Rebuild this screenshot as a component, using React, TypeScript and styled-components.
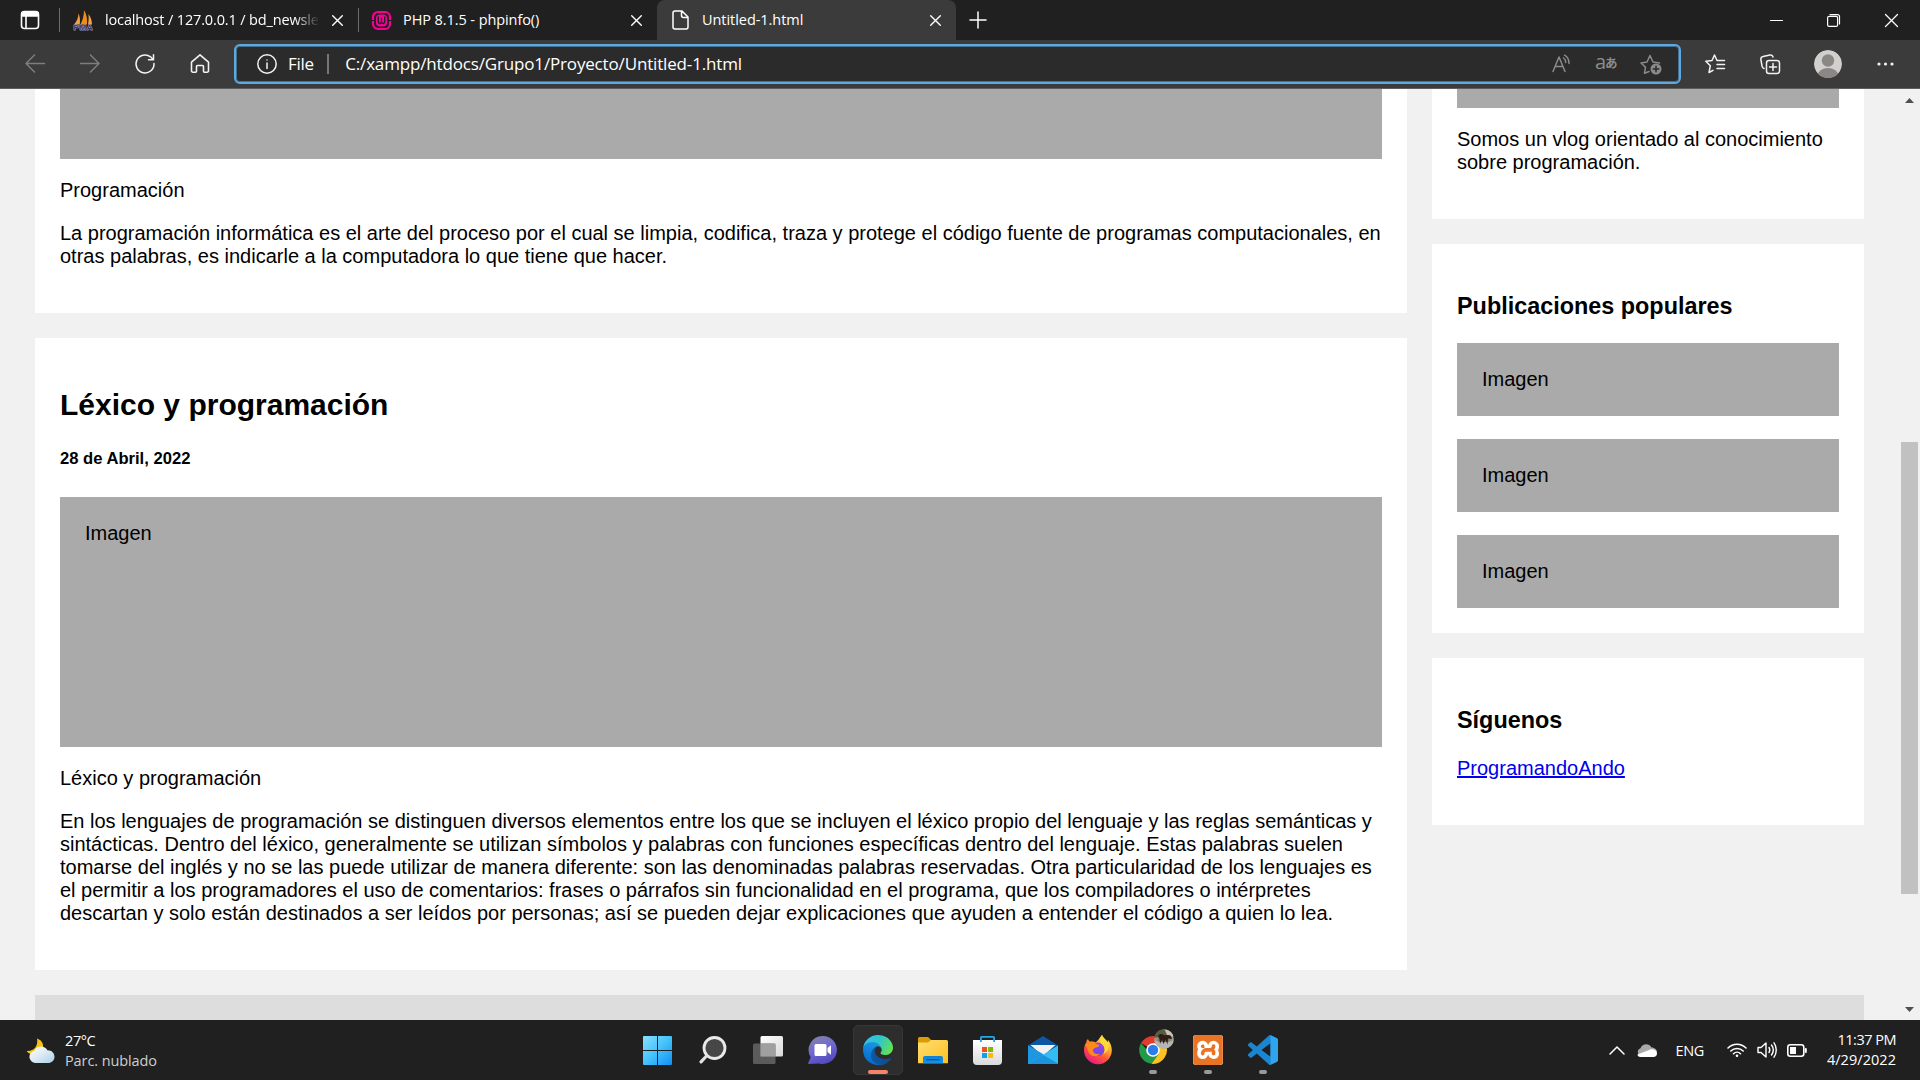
import React from "react";
import styled, { createGlobalStyle } from "styled-components";
import { SiXampp } from "react-icons/si";

const GlobalStyle = createGlobalStyle`
  html, body { margin: 0; padding: 0; overflow: hidden; background: #202020; }
  * { box-sizing: border-box; }
`;

const UI_FONT = `"Open Sans", "Noto Sans", sans-serif`;

const Screen = styled.div`
  width: 1920px;
  height: 1080px;
  display: flex;
  flex-direction: column;
  overflow: hidden;
  font-family: ${UI_FONT};
`;

/* ---------- Browser chrome ---------- */

const TabStrip = styled.div`
  height: 40px;
  flex: none;
  display: flex;
  background: #202020;
  color: #fff;
`;

const TabActions = styled.div`
  width: 59px;
  padding-left: 20px;
  display: flex;
  align-items: center;
`;

const Tab = styled.div<{ $width: number; $active?: boolean }>`
  width: ${(p) => p.$width}px;
  height: 40px;
  padding: 0 15px 0 ${(p) => (p.$active ? 15 : 13)}px;
  display: flex;
  align-items: center;
  gap: ${(p) => (p.$active ? 13 : 12)}px;
  background: ${(p) => (p.$active ? "#3b3b3b" : "transparent")};
  border-radius: 8px 8px 0 0;
`;

const TabRule = styled.div`
  width: 1px;
  height: 24px;
  margin-top: 8px;
  background: #6c6c6c;
`;

const TabTitle = styled.span<{ $spacing: number; $fade?: boolean }>`
  flex: 1;
  min-width: 0;
  overflow: hidden;
  white-space: nowrap;
  font-size: 14.5px;
  line-height: 20px;
  letter-spacing: ${(p) => p.$spacing}px;
  ${(p) => p.$fade && "mask-image: linear-gradient(90deg, #000 88%, transparent);"}
`;

const NewTab = styled.div`
  width: 44px;
  display: flex;
  align-items: center;
  justify-content: center;
`;

const WindowButtons = styled.div`
  margin-left: auto;
  display: flex;
  align-items: center;
`;

const WindowButton = styled.div`
  width: 57.5px;
  display: flex;
  justify-content: center;
`;

const Toolbar = styled.div`
  height: 49px;
  flex: none;
  display: flex;
  padding: 4px 0 4px 7px;
  background: #3b3b3b;
  border-bottom: 1px solid #5e5e5e;
  color: #f2f2f2;
`;

const NavButton = styled.div<{ $dim?: boolean; $width?: number }>`
  width: ${(p) => p.$width || 55}px;
  flex: none;
  height: 39px;
  display: flex;
  align-items: center;
  justify-content: center;
  color: ${(p) => (p.$dim ? "#7e7e7e" : "#f2f2f2")};
`;

const AddressBar = styled.div`
  width: 1447px;
  height: 40px;
  margin-left: 7px;
  padding: 0 17px 0 21px;
  display: flex;
  align-items: center;
  border: 2px solid #5ea9e2;
  box-shadow: inset 0 0 0 1px #46708f;
  border-radius: 6px;
  background: #2b2b2b;
`;

const AddressText = styled.span<{ $left: number; $spacing: number }>`
  margin-left: ${(p) => p.$left}px;
  font-size: 17px;
  line-height: 24px;
  letter-spacing: ${(p) => p.$spacing}px;
  white-space: nowrap;
  color: #fff;
`;

const AddressRule = styled.div`
  width: 2px;
  height: 20px;
  margin-left: 13px;
  background: #777;
`;

const AddressActions = styled.div`
  margin-left: auto;
  display: flex;
  align-items: center;
  gap: 23px;
  color: #8b8b8b;
`;

const BrowserActions = styled.div`
  width: 228px;
  margin-left: 6px;
  display: flex;
  align-items: center;
`;

/* ---------- Web page ---------- */

const Viewport = styled.div`
  height: 931px;
  flex: none;
  display: flex;
  overflow: hidden;
  background: #f1f1f1;
  color: #000;
  font-family: Arial, "Liberation Sans", sans-serif;
  font-size: 20px;
  line-height: 23px;
`;

const Page = styled.div`
  width: 1900px;
  padding: 0 36px 0 35px;
`;

const Columns = styled.div`
  display: grid;
  grid-template-columns: 1372px 432px;
  column-gap: 25px;
  height: 881px;
`;

const Column = styled.div`
  display: flex;
  flex-direction: column;
  gap: 25px;
`;

const Card = styled.section<{ $cut?: boolean }>`
  padding: ${(p) => (p.$cut ? 0 : 25)}px 25px 25px;
  background: #fff;
  display: flow-root;
`;

const Picture = styled.div<{ $height: number; $gap?: boolean; $empty?: boolean }>`
  height: ${(p) => p.$height}px;
  padding: ${(p) => (p.$empty ? 0 : 25)}px;
  overflow: hidden;
  background: #aaa;
  margin-bottom: ${(p) => (p.$gap ? 23 : 0)}px;
`;

const Paragraph = styled.p`
  margin: 20px 0;
`;

const Title = styled.h2`
  margin: 24px 0 27px;
  font-size: 30px;
  line-height: 35px;
`;

const DateLine = styled.h5`
  margin: 0 0 29px;
  font-size: 16.6px;
  line-height: 19px;
`;

const SideTitle = styled.h3`
  margin: 23px 0;
  font-size: 23.4px;
  line-height: 28px;
`;

const SideLink = styled.a`
  color: #0000ee;
  text-decoration: underline;
`;

const Footer = styled.div`
  height: 25px;
  margin-top: 25px;
  background: #ddd;
`;

const ScrollTrack = styled.div`
  width: 20px;
  padding-right: 1px;
  display: flex;
  flex-direction: column;
  align-items: center;
  background: #f1f1f1;
`;

const ScrollArrow = styled.div<{ $down?: boolean }>`
  width: 9px;
  height: 5px;
  margin-top: ${(p) => (p.$down ? "auto" : "9px")};
  margin-bottom: ${(p) => (p.$down ? "8px" : "0")};
  background: #505050;
  clip-path: ${(p) => (p.$down ? "polygon(0 0, 100% 0, 50% 100%)" : "polygon(50% 0, 100% 100%, 0 100%)")};
`;

const ScrollThumb = styled.div`
  width: 17px;
  height: 452px;
  margin-top: 339px;
  background: #c1c1c1;
`;

/* ---------- Taskbar ---------- */

const TaskbarRow = styled.div`
  height: 60px;
  flex: none;
  display: flex;
  background: #202020;
  color: #fff;
  font-size: 14.5px;
`;

const Weather = styled.div`
  width: 630px;
  padding: 2px 0 0 25px;
  display: flex;
  align-items: center;
  gap: 10px;
`;

const Lines = styled.div<{ $right?: boolean }>`
  display: flex;
  flex-direction: column;
  text-align: ${(p) => (p.$right ? "right" : "left")};
  line-height: 20px;
  white-space: nowrap;
`;

const Line = styled.span<{ $spacing: number; $dim?: boolean }>`
  letter-spacing: ${(p) => p.$spacing}px;
  color: ${(p) => (p.$dim ? "#cfcfcf" : "#fff")};
`;

const Apps = styled.div`
  display: flex;
  padding-top: 5px;
`;

const AppButton = styled.div<{ $active?: boolean }>`
  width: 50px;
  height: 50px;
  margin: 0 2px 0 3px;
  padding-top: 9px;
  display: flex;
  flex-direction: column;
  align-items: center;
  border-radius: 5px;
  border: 1px solid ${(p) => (p.$active ? "#373737" : "transparent")};
  background: ${(p) => (p.$active ? "#2d2d2d" : "transparent")};
`;

const RunMark = styled.div<{ $active?: boolean }>`
  width: ${(p) => (p.$active ? 20 : 8)}px;
  height: 4px;
  margin-top: 5px;
  border-radius: 2px;
  background: ${(p) => (p.$active ? "#f4836a" : "#9a9a9a")};
`;

const XamppTile = styled.div`
  width: 30px;
  height: 30px;
  flex: none;
  border-radius: 3px;
  background: #fff;
  color: #ea7425;
`;

const Tray = styled.div`
  margin-left: auto;
  padding-right: 24px;
  display: flex;
  align-items: center;
`;

const TrayItem = styled.div<{ $left: number }>`
  margin-left: ${(p) => p.$left}px;
  display: flex;
`;

/* ---------- Icons ---------- */

const Svg = styled.svg`
  flex: none;
  display: block;
  overflow: visible;
`;

type IconProps = { w: number; h?: number; box?: string; sw?: number; children: React.ReactNode };

const Icon = ({ w, h = w, box, sw = 1.5, children }: IconProps) => (
  <Svg
    width={w}
    height={h}
    viewBox={box || `0 0 ${w} ${h}`}
    fill="none"
    stroke="currentColor"
    strokeWidth={sw}
    strokeLinecap="round"
    strokeLinejoin="round"
  >
    {children}
  </Svg>
);

const CloseIcon = () => (
  <Icon w={11} sw={1.4}>
    <path d="M.7.7l9.6 9.6M10.3.7L.7 10.3" />
  </Icon>
);

const PmaIcon = () => (
  <Icon w={20}>
    <g stroke="none">
      <path d="M1 14.500C3.500 12 5.300 8 5.500 3.500c1.500 3 1.800 7 1.300 11z" fill="#f5a040" />
      <path d="M7.500 14.500C10 9.500 11 5 11 0c2.800 4.500 3.400 9.500 3 14.500z" fill="#f08c1c" />
      <path d="M15 14.500c.7-3.500.8-7 .5-10.500 2.300 3 3.500 7 3.500 10.500z" fill="#f5a040" />
      <text x="10" y="20" fontFamily="Liberation Sans, sans-serif" fontWeight="700" fontSize="8" textAnchor="middle" textLength="19" fill="#33396b" stroke="#a8aedc" strokeWidth=".9" paintOrder="stroke">PMA</text>
    </g>
  </Icon>
);

const WampIcon = () => (
  <Icon w={19}>
    <rect x="1" y="1" width="17" height="17" rx="5" stroke="#f70094" strokeWidth="2.200" />
    <path d="M0 9.500h4M15 9.500h4" stroke="#202020" strokeWidth="1.200" />
    <rect x="4" y="3.500" width="11" height="12" rx="4" fill="#f70094" stroke="none" />
    <path d="M6.300 6v4.300c0 2.900 3.200 2.900 3.200.3V7v3.600c0 2.600 3.200 2.600 3.200-.3V6" stroke="#202020" strokeWidth="1.300" />
  </Icon>
);

const WeatherIcon = () => (
  <Icon w={30} h={26}>
    <defs>
      <linearGradient id="cloud" x1="0" y1="0" x2="1" y2="1">
        <stop offset="0" stopColor="#fff" />
        <stop offset=".5" stopColor="#dceaf4" />
        <stop offset="1" stopColor="#a9cfe8" />
      </linearGradient>
    </defs>
    <g stroke="none">
      <path d="M12 .5c6 2 7.500 7.500 5 12-3 5-11 6-15.500.5C9 13.500 13.500 8 12 .5z" fill="#fdc010" />
      <path d="M10.500 25a6.200 6.200 0 0 1-1-12.300c2-5.500 10.500-5.500 12.800-.5 4-.3 7.200 2.700 7.200 6.500s-3 6.300-6.500 6.300z" fill="url(#cloud)" />
    </g>
  </Icon>
);

const WindowsLogo = () => (
  <Icon w={30}>
    <defs>
      <linearGradient id="win" gradientUnits="userSpaceOnUse" x1="0" y1="0" x2="30" y2="30">
        <stop offset="0" stopColor="#8be2ff" />
        <stop offset=".5" stopColor="#45c2fb" />
        <stop offset="1" stopColor="#0e8ff5" />
      </linearGradient>
    </defs>
    <path stroke="none" fill="url(#win)" d="M1 1h13v14H0V2a1 1 0 0 1 1-1zM15 1h13a1 1 0 0 1 1 1v13H15zM0 16h14v14H1a1 1 0 0 1-1-1zM15 16h14v13a1 1 0 0 1-1 1H15z" />
  </Icon>
);

const SearchIcon = () => (
  <Icon w={30}>
    <circle cx="16.500" cy="13" r="10.500" stroke="#e9eaec" strokeWidth="2.800" fill="#474747" />
    <path d="M8.500 21L3 26.800" stroke="#dfe2e6" strokeWidth="3.200" />
  </Icon>
);

const TaskViewIcon = () => (
  <Icon w={30}>
    <defs>
      <linearGradient id="tv" x1="0" y1="0" x2="1" y2="1">
        <stop offset="0" stopColor="#fff" />
        <stop offset="1" stopColor="#d9d9d9" />
      </linearGradient>
    </defs>
    <g stroke="none">
      <rect x="7.500" y="1" width="22.500" height="20.500" rx="1.500" fill="url(#tv)" />
      <rect x="0" y="8.500" width="22.500" height="20.500" rx="1.500" fill="#666" fillOpacity=".85" />
      <path d="M7.500 8.500h15v13h-15z" fill="#a0a0a0" />
    </g>
  </Icon>
);

const ChatIcon = () => (
  <Icon w={30}>
    <defs>
      <linearGradient id="chat" x1=".2" y1="0" x2=".6" y2="1">
        <stop offset="0" stopColor="#8583a8" />
        <stop offset=".5" stopColor="#6f67d2" />
        <stop offset="1" stopColor="#5148bd" />
      </linearGradient>
    </defs>
    <g stroke="none">
      <path d="M14.900 1a14 14 0 1 1-4 27.400L1 29C-.2 29 0 28 .4 27.500l2.300-5.200A14 14 0 0 1 14.900 1z" fill="url(#chat)" />
      <rect x="6.500" y="9" width="12" height="12" rx="1.500" fill="#fff" />
      <path d="M19.500 13l3.500-2.800v9.600L19.500 17z" fill="#fff" />
    </g>
  </Icon>
);

const EdgeIcon = () => (
  <Icon w={30} box="0 0 256 256">
    <defs>
      <linearGradient id="e1" x1="0" y1="0" x2="1" y2="0">
        <stop offset="0" stopColor="#0c59a4" />
        <stop offset="1" stopColor="#114a8b" />
      </linearGradient>
      <linearGradient id="e2" x1=".6" y1="0" x2=".3" y2="1">
        <stop offset="0" stopColor="#1b9de2" />
        <stop offset=".5" stopColor="#0e7fd8" />
        <stop offset="1" stopColor="#0667c8" />
      </linearGradient>
      <linearGradient id="e3" x1="0" y1=".2" x2="1" y2=".6">
        <stop offset="0" stopColor="#35c1f1" />
        <stop offset=".5" stopColor="#2fc6c8" />
        <stop offset="1" stopColor="#62e254" />
      </linearGradient>
    </defs>
    <g stroke="none">
      <path fill="url(#e1)" d="M235.700 195.500a93.700 93.700 0 0 1-10.600 4.700 101.900 101.900 0 0 1-35.900 6.400c-47.300 0-88.500-32.500-88.500-74.300a31.500 31.500 0 0 1 16.400-27.300c-42.800 1.800-53.800 46.400-53.800 72.500 0 74 68.100 81.400 82.800 81.400 7.900 0 19.800-2.300 27-4.600l1.300-.4a128.300 128.300 0 0 0 66.600-52.800 4 4 0 0 0-5.300-5.600Z" />
      <path fill="url(#e2)" d="M105.700 241.400a79.200 79.200 0 0 1-22.700-21.300 80.700 80.700 0 0 1 29.500-120c3.200-1.500 8.500-4.100 15.600-4a32.400 32.400 0 0 1 25.700 13 31.900 31.900 0 0 1 6.300 18.700c0-.2 24.500-79.600-80-79.600-43.900 0-80 41.600-80 78.200a130.200 130.200 0 0 0 12.100 56 128 128 0 0 0 156.400 67 75.500 75.500 0 0 1-62.800-8Z" />
      <path fill="url(#e3)" d="M152.300 148.900c-.9 1-3.400 2.500-3.400 5.600 0 2.600 1.700 5.200 4.800 7.300 14.300 10 41.400 8.600 41.500 8.600a59.600 59.600 0 0 0 30.300-8.300 61.400 61.400 0 0 0 30.400-52.900c.3-22.400-8-37.300-11.300-43.900C223.500 23.900 177.700 0 128 0A128 128 0 0 0 0 126.200c.5-36.500 36.800-66 80-66 3.500 0 23.500.3 42 10a72.600 72.600 0 0 1 30.900 29.300c6.100 10.600 7.200 24.100 7.200 29.500s-2.700 13.300-7.800 19.900Z" />
    </g>
  </Icon>
);

const FolderIcon = () => (
  <Icon w={30}>
    <defs>
      <linearGradient id="fold" x1="0" y1="0" x2="1" y2="1">
        <stop offset="0" stopColor="#ffdf72" />
        <stop offset="1" stopColor="#fdbf20" />
      </linearGradient>
      <linearGradient id="fb" x1="0" y1="0" x2="0" y2="1">
        <stop offset="0" stopColor="#0f7fd6" />
        <stop offset="1" stopColor="#1494e6" />
      </linearGradient>
    </defs>
    <g stroke="none">
      <path d="M0 3.500A1.500 1.500 0 0 1 1.500 2h8c2 0 2.500 3 4 3H28v10H0z" fill="#dc9a05" />
      <path d="M0 7.500h10L13 5h15.500A1.500 1.500 0 0 1 30 6.500V28.300H0z" fill="url(#fold)" />
      <path d="M5 28.300V23a2 2 0 0 1 2-2h16a2 2 0 0 1 2 2v5.300z" fill="url(#fb)" />
      <rect x="8.500" y="24" width="13" height="1.300" fill="#0a5598" />
    </g>
  </Icon>
);

const StoreIcon = () => (
  <Icon w={30}>
    <defs>
      <linearGradient id="st" x1="0" y1="0" x2="0" y2="1">
        <stop offset="0" stopColor="#fff" />
        <stop offset="1" stopColor="#dadada" />
      </linearGradient>
    </defs>
    <g stroke="none">
      <path d="M0 5h29v21a4 4 0 0 1-4 4H4a4 4 0 0 1-4-4z" fill="url(#st)" />
      <path d="M7 7V2.500A1.500 1.500 0 0 1 8.500 1h12a1.500 1.500 0 0 1 1.500 1.500V7h-1.800V2.800H8.800V7z" fill="#1fa8e6" />
      <path d="M9 12h5v5H9z" fill="#f1511b" />
      <path d="M15.100 12h5v5h-5z" fill="#80b900" />
      <path d="M9 18h5v5H9z" fill="#05a6f0" />
      <path d="M15.100 18h5v5h-5z" fill="#fbb908" />
    </g>
  </Icon>
);

const MailIcon = () => (
  <Icon w={30}>
    <g stroke="none">
      <path d="M0 10.500L15 1l15 9.500V18H0z" fill="#0b57a5" />
      <path d="M2.500 10h25L15 21z" fill="#f1f1f1" />
      <path d="M0 10.500L15 19v10H1a1 1 0 0 1-1-1z" fill="#1b9de4" />
      <path d="M0 10.500L30 29H1a1 1 0 0 1-1-1z" fill="#1f96e0" />
      <path d="M30 10.500L0 29h29a1 1 0 0 0 1-1z" fill="#34bdf2" />
      <path d="M15 19.800L30 28.500V29H.5z" fill="#1b93de" />
    </g>
  </Icon>
);

const FirefoxIcon = () => (
  <Icon w={30}>
    <defs>
      <linearGradient id="ff" x1=".85" y1=".05" x2=".25" y2="1">
        <stop offset="0" stopColor="#fff04a" />
        <stop offset=".3" stopColor="#ffb52e" />
        <stop offset=".6" stopColor="#ff5a36" />
        <stop offset="1" stopColor="#e8128a" />
      </linearGradient>
      <linearGradient id="fp" x1=".5" y1="0" x2=".5" y2="1">
        <stop offset="0" stopColor="#a13ef0" />
        <stop offset="1" stopColor="#6a4be0" />
      </linearGradient>
    </defs>
    <g stroke="none">
      <path d="M19 0c1 3 4 4.500 5.800 7.300.3-1 .2-1.800 0-2.600 2.700 3 4 7 4 10.300A13.900 13.900 0 0 1 1 15.500c0-4 1-6.500 2.300-8 0-1.200.6-2.700 1.700-3.500.3 1.200 1 2.200 2 2.700 2.200-.3 4.300 0 5.500.8C14.500 6.500 16.500 3 19 0z" fill="url(#ff)" />
      <circle cx="14.700" cy="14.300" r="6.800" fill="url(#fp)" />
      <path d="M2.300 10C4 6.500 8.500 6 12 8c1.500 1 2.500 1.700 4.300 2-.3 2-2 2.300-3.600 2.600-1.700.6-1.500 1.600-3 2.300.3 3.500 4 5 7.300 3.800-2.500 3.300-9 3.300-11-1C4.500 15 4 12 2.300 10z" fill="#ff8a1c" />
      <path d="M19 0c-3 4-3.300 7 .7 9.700 2.500 2.400 2.600 6.300 1 9 4.500-1.500 6-7.300 4.100-11.400C23 4.500 20 3 19 0z" fill="#ffd93a" />
    </g>
  </Icon>
);

const ChromeIcon = () => (
  <Icon w={30}>
    <defs>
      <radialGradient id="pic">
        <stop offset="0" stopColor="#5b4134" />
        <stop offset=".5" stopColor="#8c7a66" />
        <stop offset="1" stopColor="#a7aaa0" />
      </radialGradient>
      <clipPath id="picClip">
        <circle cx="26" cy="4" r="9.800" />
      </clipPath>
    </defs>
    <g stroke="none">
      <path d="M15 15L3 8a13.900 13.900 0 0 1 24 0z" fill="#e33b2e" />
      <path d="M15 15H9L3 8a13.900 13.900 0 0 0 10.500 20.800L21 18.500z" fill="#229a4a" />
      <path d="M27 8H15l6 10.500-7.500 10.300A13.900 13.900 0 0 0 27 8z" fill="#fcc31e" />
      <circle cx="15" cy="15" r="6.800" fill="#fff" />
      <circle cx="15" cy="15" r="5.200" fill="#2b7de9" />
      <g clipPath="url(#picClip)">
        <circle cx="26" cy="4" r="10" fill="url(#pic)" />
        <path d="M16-6h10l3 6-13 3z" fill="#5a5c40" />
        <path d="M27-6h9v8l-7-2z" fill="#c9c3b6" />
        <path d="M16 5c6 3 14 3 20 0v10H16z" fill="#b4b5b5" />
        <path d="M20 1c2-3 4-2 6-1s4-1 7 1l1 3-4-.5-.5 6-2-5-2 4.500-1.500-4.500-2 4.500-.5-5z" fill="#2e1d17" />
      </g>
    </g>
  </Icon>
);

const CodeIcon = () => (
  <Icon w={30} box="0 0 24 24">
    <g stroke="none">
      <path fill="#1b86cf" d="M23.150 2.587L18.210.210a1.494 1.494 0 0 0-1.705.290l-9.460 8.630-4.120-3.128a.999.999 0 0 0-1.276.057L.327 7.261A1 1 0 0 0 .326 8.740L3.899 12 .326 15.260a1 1 0 0 0 .001 1.479L1.650 17.940a.999.999 0 0 0 1.276.057l4.120-3.128 9.460 8.630a1.492 1.492 0 0 0 1.704.290l4.942-2.377A1.500 1.500 0 0 0 24 20.060V3.939a1.500 1.500 0 0 0-.850-1.352zm-5.146 14.861L10.826 12l7.178-5.448v10.896z" />
      <path fill="#2fa5f0" d="M18 .150l5.150 2.437A1.500 1.500 0 0 1 24 3.939V20.060a1.500 1.500 0 0 1-.850 1.352L18 23.850z" />
    </g>
  </Icon>
);

/* ---------- Sections ---------- */

const Chrome = () => (
  <>
    <TabStrip>
      <TabActions>
        <Icon w={20} sw={1.6}>
          <rect x="1.500" y="1.500" width="17" height="17" rx="3" />
          <path d="M2 2.500h16v3.500H2zM6 6v12" fill="currentColor" />
        </Icon>
      </TabActions>
      <TabRule />
      <Tab $width={298}>
        <PmaIcon />
        <TabTitle $spacing={-0.15} $fade>localhost / 127.0.0.1 / bd_newsletter</TabTitle>
        <CloseIcon />
      </Tab>
      <TabRule />
      <Tab $width={298}>
        <WampIcon />
        <TabTitle $spacing={-0.08}>PHP 8.1.5 - phpinfo()</TabTitle>
        <CloseIcon />
      </Tab>
      <Tab $width={299} $active>
        <Icon w={17} h={20} sw={1.5}>
          <path d="M3 1h7l6 6v10a2 2 0 0 1-2 2H3a2 2 0 0 1-2-2V3a2 2 0 0 1 2-2zM9.500 1v4.500a2 2 0 0 0 2 2H16" />
        </Icon>
        <TabTitle $spacing={-0.05}>Untitled-1.html</TabTitle>
        <CloseIcon />
      </Tab>
      <NewTab>
        <Icon w={18}>
          <path d="M9 1v16M1 9h16" />
        </Icon>
      </NewTab>
      <WindowButtons>
        <WindowButton>
          <Icon w={13} sw={1.2}><path d="M.5 6.500h12" /></Icon>
        </WindowButton>
        <WindowButton>
          <Icon w={13} sw={1.2}>
            <rect x=".6" y="2.400" width="10" height="10" rx="1.500" />
            <path d="M3 .6h7.500a2 2 0 0 1 2 2V10" />
          </Icon>
        </WindowButton>
        <WindowButton>
          <Icon w={13} sw={1.3}><path d="M.5.5l12 12M12.500.5l-12 12" /></Icon>
        </WindowButton>
      </WindowButtons>
    </TabStrip>
    <Toolbar>
      <NavButton $dim>
        <Icon w={20}><path d="M19.500 9.500H1M9.500 1L1 9.500 9.500 18" /></Icon>
      </NavButton>
      <NavButton $dim>
        <Icon w={20}><path d="M.5 9.500H19M10.500 1L19 9.500 10.500 18" /></Icon>
      </NavButton>
      <NavButton>
        <Icon w={20}><path d="M19 9.500A9 9 0 1 1 15.500 2.800L18 5.500M18.500.8v5h-5" /></Icon>
      </NavButton>
      <NavButton>
        <Icon w={20} sw={1.6}><path d="M1.500 8.200L10 .8l8.500 7.400V16.500A1.500 1.500 0 0 1 17 18.200h-2.500a1 1 0 0 1-1-1V12.500A1 1 0 0 0 12.500 11.500h-5a1 1 0 0 0-1 1v4.700a1 1 0 0 1-1 1H3A1.500 1.500 0 0 1 1.500 16.500z" /></Icon>
      </NavButton>
      <AddressBar>
        <Icon w={20}>
          <circle cx="10" cy="10" r="9.200" />
          <path d="M10 9v5.500M10 6v.1" />
        </Icon>
        <AddressText $left={11} $spacing={-0.3}>File</AddressText>
        <AddressRule />
        <AddressText $left={16.5} $spacing={-0.16}>C:/xampp/htdocs/Grupo1/Proyecto/Untitled-1.html</AddressText>
        <AddressActions>
          <Icon w={20}>
            <path d="M1 17.500L7 3l6 14.500M3 12.500h8M11.500 4c1.500 1 2.200 2.300 2.200 4.500M12.500 1.200c2.700 1.500 4.500 4.500 4.500 8.300" />
          </Icon>
          <Icon w={22} h={20}>
            <g stroke="none" fill="currentColor">
              <text x="0" y="14.500" fontFamily="Open Sans, sans-serif" fontSize="20">a</text>
              <text x="10" y="14" fontFamily="Noto Sans CJK JP, sans-serif" fontWeight="700" fontSize="12.500">あ</text>
            </g>
          </Icon>
          <Icon w={22} h={22}>
            <path d="M9 18.500l-4.500 1.700 1-6L1 10l6-1 3-6.500 3 6.500 6.500 1" />
            <circle cx="16" cy="16" r="5.500" fill="currentColor" stroke="none" />
            <path d="M16 13.200v5.600M13.200 16h5.600" stroke="#2b2b2b" />
          </Icon>
        </AddressActions>
      </AddressBar>
      <BrowserActions>
        <NavButton>
          <Icon w={20}>
            <path d="M13 6.500h-1L9.500 1 7 6.500.8 7.300l4.500 4.500L4 18.500l4-2.200M13 6.500h6.500M12 10.500h7.500M12 14.500h7.500" />
          </Icon>
        </NavButton>
        <NavButton>
          <Icon w={20}>
            <path d="M4 14.500A3 3 0 0 1 2 12L.9 5.500A2.500 2.500 0 0 1 3 2.500L10 1a2.500 2.500 0 0 1 3 2" />
            <rect x="6.500" y="6.500" width="13" height="13" rx="2.500" />
            <path d="M13 9.500v7M9.500 13h7" />
          </Icon>
        </NavButton>
        <NavButton $width={61}>
          <Icon w={28}>
            <clipPath id="face"><circle cx="14" cy="14" r="14" /></clipPath>
            <g stroke="none" clipPath="url(#face)">
              <circle cx="14" cy="14" r="14" fill="#d2d0ce" />
              <circle cx="14" cy="10.500" r="6.200" fill="#8a8785" />
              <ellipse cx="14" cy="26" rx="10.500" ry="8" fill="#8a8785" />
            </g>
          </Icon>
        </NavButton>
        <NavButton>
          <Icon w={17} h={4}>
            <g stroke="none" fill="currentColor">
              <circle cx="2" cy="2" r="1.600" />
              <circle cx="8.500" cy="2" r="1.600" />
              <circle cx="15" cy="2" r="1.600" />
            </g>
          </Icon>
        </NavButton>
      </BrowserActions>
    </Toolbar>
  </>
);

const WebPage = () => (
  <Viewport>
    <Page>
      <Columns>
        <Column>
          <Card $cut>
            <Picture $height={70} $empty />
            <Paragraph>Programación</Paragraph>
            <Paragraph>
              La programación informática es el arte del proceso por el cual se limpia, codifica, traza y protege el código
              fuente de programas computacionales, en otras palabras, es indicarle a la computadora lo que tiene que hacer.
            </Paragraph>
          </Card>
          <Card>
            <Title>Léxico y programación</Title>
            <DateLine>28 de Abril, 2022</DateLine>
            <Picture $height={250}>Imagen</Picture>
            <Paragraph>Léxico y programación</Paragraph>
            <Paragraph>
              En los lenguajes de programación se distinguen diversos elementos entre los que se incluyen el léxico propio
              del lenguaje y las reglas semánticas y sintácticas. Dentro del léxico, generalmente se utilizan símbolos y
              palabras con funciones específicas dentro del lenguaje. Estas palabras suelen tomarse del inglés y no se las
              puede utilizar de manera diferente: son las denominadas palabras reservadas. Otra particularidad de los
              lenguajes es el permitir a los programadores el uso de comentarios: frases o párrafos sin funcionalidad en el
              programa, que los compiladores o intérpretes descartan y solo están destinados a ser leídos por personas; así
              se pueden dejar explicaciones que ayuden a entender el código a quien lo lea.
            </Paragraph>
          </Card>
        </Column>
        <Column>
          <Card $cut>
            <Picture $height={19} $empty />
            <Paragraph>Somos un vlog orientado al conocimiento sobre programación.</Paragraph>
          </Card>
          <Card>
            <SideTitle>Publicaciones populares</SideTitle>
            <Picture $height={73} $gap>Imagen</Picture>
            <Picture $height={73} $gap>Imagen</Picture>
            <Picture $height={73}>Imagen</Picture>
          </Card>
          <Card>
            <SideTitle>Síguenos</SideTitle>
            <Paragraph>
              <SideLink>ProgramandoAndo</SideLink>
            </Paragraph>
          </Card>
        </Column>
      </Columns>
      <Footer />
    </Page>
    <ScrollTrack>
      <ScrollArrow />
      <ScrollThumb />
      <ScrollArrow $down />
    </ScrollTrack>
  </Viewport>
);

const Taskbar = () => (
  <TaskbarRow>
    <Weather>
      <WeatherIcon />
      <Lines>
        <Line $spacing={-0.4}>27°C</Line>
        <Line $spacing={-0.1} $dim>Parc. nublado</Line>
      </Lines>
    </Weather>
    <Apps>
      <AppButton><WindowsLogo /></AppButton>
      <AppButton><SearchIcon /></AppButton>
      <AppButton><TaskViewIcon /></AppButton>
      <AppButton><ChatIcon /></AppButton>
      <AppButton $active><EdgeIcon /><RunMark $active /></AppButton>
      <AppButton><FolderIcon /></AppButton>
      <AppButton><StoreIcon /></AppButton>
      <AppButton><MailIcon /></AppButton>
      <AppButton><FirefoxIcon /></AppButton>
      <AppButton><ChromeIcon /><RunMark /></AppButton>
      <AppButton><XamppTile><SiXampp size={30} /></XamppTile><RunMark /></AppButton>
      <AppButton><CodeIcon /><RunMark /></AppButton>
    </Apps>
    <Tray>
      <TrayItem $left={0}>
        <Icon w={16} h={9}><path d="M1 8l7-7 7 7" /></Icon>
      </TrayItem>
      <TrayItem $left={12}>
        <Icon w={20} h={13}>
          <g stroke="none">
            <path d="M4 12a4 4 0 0 1-.5-7.700C5-.5 12-1.500 14.500 3.500 18 3.500 20 6 20 8L8 12z" fill="#a9a9a9" />
            <path d="M3.500 13c-2 0-3-1-3-2.500L14 5.300c3.500 0 6 1.500 6 4.200 0 2-1.500 3.500-3.500 3.500z" fill="#fff" />
          </g>
        </Icon>
      </TrayItem>
      <TrayItem $left={19}><Line $spacing={-0.4}>ENG</Line></TrayItem>
      <TrayItem $left={23}>
        <Icon w={20} h={16} sw={1.6}>
          <path d="M1 6a12.700 12.700 0 0 1 18 0M3.800 9a8.800 8.800 0 0 1 12.400 0M6.500 11.700a5 5 0 0 1 7 0" />
          <circle cx="10" cy="13.800" r="1.300" fill="currentColor" stroke="none" />
        </Icon>
      </TrayItem>
      <TrayItem $left={10}>
        <Icon w={20} h={18} sw={1.4}>
          <path d="M1 6.500h3L9 2v14l-5-4.500H1zM12 6.500c1 1.500 1 3.500 0 5M14.500 4c2.200 3 2.200 7 0 10M17 1.800c3 4.200 3 10.200 0 14.400" />
        </Icon>
      </TrayItem>
      <TrayItem $left={10}>
        <Icon w={20} h={13} sw={1.6}>
          <rect x=".8" y=".8" width="16" height="11.400" rx="2.500" />
          <path d="M3 3h6v7H3z" fill="#fff" stroke="none" />
          <path d="M18.800 5v3" strokeWidth="2" />
        </Icon>
      </TrayItem>
      <TrayItem $left={20}>
        <Lines $right>
          <Line $spacing={-0.5}>11:37 PM</Line>
          <Line $spacing={0.05}>4/29/2022</Line>
        </Lines>
      </TrayItem>
    </Tray>
  </TaskbarRow>
);

export default function App() {
  return (
    <Screen>
      <GlobalStyle />
      <Chrome />
      <WebPage />
      <Taskbar />
    </Screen>
  );
}
